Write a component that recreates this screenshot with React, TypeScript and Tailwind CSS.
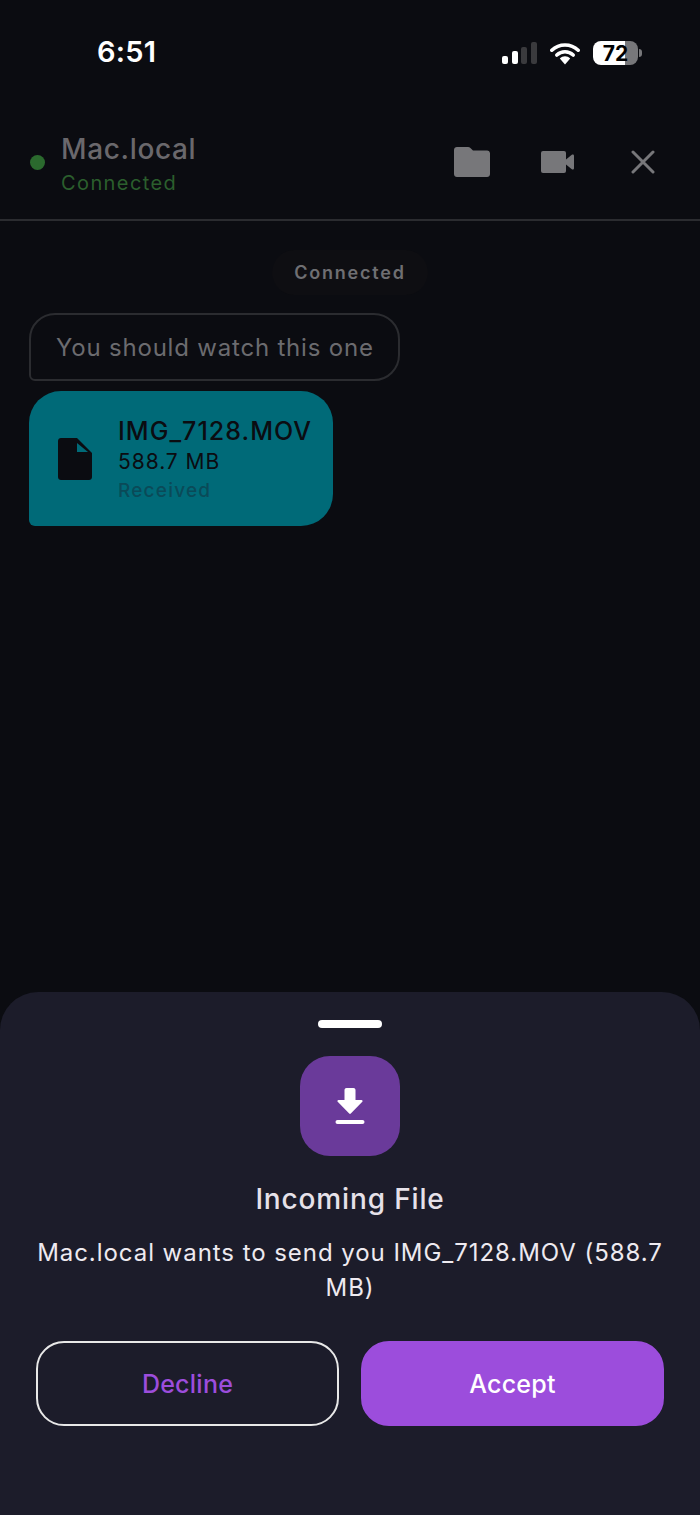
function SignalIcon() {
  return (
    <svg width="35" height="22" viewBox="0 0 35 22">
      <rect x="0" y="14" width="6" height="8" rx="2" fill="#fff" />
      <rect x="10" y="9" width="6" height="13" rx="2" fill="#fff" />
      <rect x="19" y="5" width="6" height="17" rx="2" fill="#3a3a3d" />
      <rect x="29" y="0" width="6" height="22" rx="2" fill="#3a3a3d" />
    </svg>
  );
}

function WifiIcon() {
  return (
    <svg width="30" height="23" viewBox="0 0 30 23" fill="none">
      <path d="M1.8 8.2C9.2 1.2 20.8 1.2 28.2 8.2" stroke="#fff" strokeWidth="3.6" strokeLinecap="round" />
      <path d="M6.8 13C11.6 8.6 18.4 8.6 23.2 13" stroke="#fff" strokeWidth="3.6" strokeLinecap="round" />
      <path d="M9.8 16.4C12.8 13.6 17.2 13.6 20.2 16.4L15 22.4Z" fill="#fff" />
    </svg>
  );
}

function FolderIcon() {
  return (
    <svg width="36" height="30" viewBox="0 0 36 30" fill="#77777a">
      <path d="M3 0H14C15 0 15.8.4 16.4 1L19 3.4H33C34.7 3.4 36 4.7 36 6.4V27C36 28.700 34.700 30 33 30H3C1.300 30 0 28.700 0 27V3C0 1.300 1.300 0 3 0Z" />
    </svg>
  );
}

function VideoIcon() {
  return (
    <svg width="33" height="22" viewBox="0 0 33 22" fill="#77777a">
      <rect x="0" y="0" width="25" height="22" rx="2" />
      <path d="M25 8.500L30.800 3.800C31.800 3.100 33 3.700 33 4.800V17.200C33 18.300 31.800 18.900 30.800 18.200L25 13.500Z" />
    </svg>
  );
}

function CloseIcon() {
  return (
    <svg width="24" height="24" viewBox="0 0 24 24" fill="none" stroke="#77777a" strokeWidth="3" strokeLinecap="round">
      <path d="M2 2L22 22M22 2L2 22" />
    </svg>
  );
}

function FileIcon() {
  return (
    <svg width="34" height="42" viewBox="0 0 34 42">
      <path d="M3 0H19L34 15V39C34 40.700 32.700 42 31 42H3C1.300 42 0 40.700 0 39V3C0 1.300 1.300 0 3 0Z" fill="#0b0c11" />
      <path d="M19 5V14H30Z" fill="#006a78" />
    </svg>
  );
}

function DownloadIcon() {
  return (
    <svg width="30" height="37" viewBox="0 0 30 37" fill="#fff">
      <path d="M9.500 2C9.500 .9 10.400 0 11.500 0H18.500C19.600 0 20.500 .9 20.500 2V12H26.500C27.500 12 28 13.100 27.300 13.800L15.800 25.600C15.400 26 14.600 26 14.200 25.600L2.700 13.800C2 13.100 2.500 12 3.500 12H9.500Z" />
      <rect x="0.500" y="32" width="29" height="4" rx="2" />
    </svg>
  );
}

export default function App() {
  return (
    <div className="flex h-[1515px] w-[700px] flex-col overflow-hidden bg-[#0b0c11] font-['Inter',sans-serif]">
      {/* Status bar */}
      <div className="flex h-[105px] items-start justify-between pl-[97px] pr-[58px] pt-[34px]">
        <span className="text-[29px] font-semibold leading-9 tracking-[0.2px] text-white">6:51</span>
        <div className="mt-[7px] flex items-center">
          <SignalIcon />
          <div className="ml-[13px]">
            <WifiIcon />
          </div>
          <div className="ml-[13px] flex h-6 w-[45px] items-center justify-center rounded-lg bg-[linear-gradient(90deg,#fff_71%,#77777a_71%)] text-[21px] font-bold leading-none text-black">
            72
          </div>
          <div className="ml-px h-2 w-[3px] rounded-r-sm bg-[#77777a]" />
        </div>
      </div>

      {/* Header */}
      <header className="flex h-[116px] items-center justify-between border-b-2 border-[#2b2c30] pl-[30px] pr-[45px]">
        <div className="flex items-center gap-4">
          <div className="h-[15px] w-[15px] rounded-full bg-[#2b6a2e]" />
          <div className="flex flex-col pt-[2px]">
            <span className="text-[28px] font-medium leading-[36px] tracking-[0.65px] text-[#6a686c]">Mac.local</span>
            <span className="mt-[3px] text-[20px] leading-[26px] tracking-[1.4px] text-[#2b5f2d]">Connected</span>
          </div>
        </div>
        <div className="flex items-center">
          <FolderIcon />
          <div className="ml-[51px]">
            <VideoIcon />
          </div>
          <div className="ml-[57px]">
            <CloseIcon />
          </div>
        </div>
      </header>

      {/* Messages */}
      <main className="flex flex-1 flex-col items-start px-[29px] pt-[29px]">
        <div className="self-center rounded-full bg-[#0e0e12] px-[22px] py-[9px] text-[18px] font-semibold leading-[27px] tracking-[1.8px] text-[#6f6f72]">
          Connected
        </div>
        <div className="mt-[18px] flex h-[68px] items-center rounded-[26px] rounded-bl-[6px] border-2 border-[#2b2c30] pl-[25px] pr-6 pt-[2px] text-[24px] tracking-[0.8px] text-[#6b6b6f]">
          You should watch this one
        </div>
        <div className="mt-[10px] flex h-[135px] w-[304px] items-center rounded-[32px] rounded-bl-[6px] bg-[#006a78] pl-[29px]">
          <FileIcon />
          <div className="ml-[26px] flex flex-col pt-[3px]">
            <span className="text-[25px] font-medium leading-[32px] tracking-[1.05px] text-[#0b0c11]">IMG_7128.MOV</span>
            <span className="text-[21px] leading-[30px] tracking-[0.95px] text-[#0b0c11]">588.7 MB</span>
            <span className="text-[19px] font-medium leading-[28px] tracking-[1.2px] text-[#0a4a58]">Received</span>
          </div>
        </div>
      </main>

      {/* Incoming file sheet */}
      <section className="flex h-[523px] flex-col items-center rounded-t-[38px] bg-[#1c1c2a] px-9 pt-7">
        <div className="h-2 w-16 rounded-full bg-white" />
        <div className="mt-7 flex h-[100px] w-[100px] items-center justify-center rounded-[30px] bg-[#6a3a9a]">
          <DownloadIcon />
        </div>
        <h2 className="mt-[23px] text-[28px] font-medium leading-[40px] tracking-[0.85px] text-[#e6e1e9]">Incoming File</h2>
        <p className="mt-[16px] text-center text-[24px] leading-[35px] tracking-[0.95px] text-[#eeeaf0]">
          Mac.local wants to send you IMG_7128.MOV (588.7 MB)
        </p>
        <div className="mt-[36px] flex w-full gap-[22px]">
          <button className="flex h-[85px] flex-1 items-center justify-center rounded-[28px] border-2 border-[#e8e8e8] pt-[2px] text-[25px] font-medium tracking-[0.25px] text-[#9c4ddc]">
            Decline
          </button>
          <button className="flex h-[85px] flex-1 items-center justify-center rounded-[28px] border-2 border-[#9c4ddc] bg-[#9c4ddc] pt-[2px] text-[25px] font-medium tracking-[0.25px] text-white">
            Accept
          </button>
        </div>
      </section>
    </div>
  );
}
